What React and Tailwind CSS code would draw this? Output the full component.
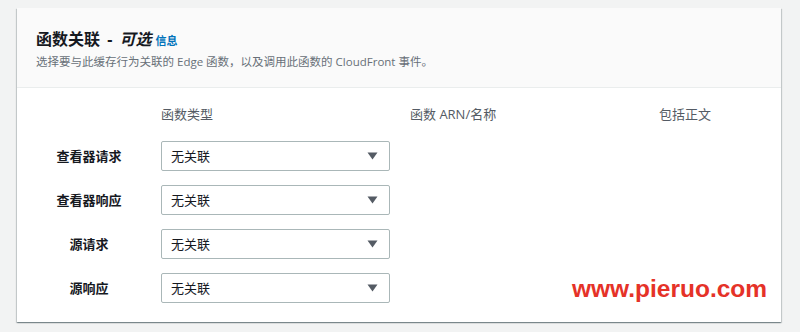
import React from "react";

const rows = ["查看器请求", "查看器响应", "源请求", "源响应"];

function Select() {
  return (
    <div className="flex h-[30px] w-[229px] items-center justify-between rounded-[2px] border border-[#aab7b8] bg-white pl-[9px] pr-[10px]">
      <span className="text-[13px] leading-[18px] text-[#16191f]">无关联</span>
      <svg width="11" height="8" viewBox="0 0 11 8" className="mr-[1px]">
        <path d="M0.5 0.5 H10.5 L5.5 7.5 Z" fill="#545b64" />
      </svg>
    </div>
  );
}

export default function App() {
  return (
    <div
      className="relative h-[332px] w-[800px] bg-[#f2f3f3] pt-[8px]"
      style={{ fontFamily: '"Open Sans","Noto Sans CJK SC",sans-serif' }}
    >
      <div className="ml-[17px] w-[764px] bg-white shadow-[0_1px_1px_0_rgba(0,28,36,0.3),1px_1px_1px_0_rgba(0,28,36,0.15),-1px_1px_1px_0_rgba(0,28,36,0.15)]">
        <div className="h-[80px] border-b border-[#eaeded] bg-[#fafafa] pl-[19px] pt-[20px]">
          <div className="flex items-baseline">
            <span className="text-[16px] font-bold leading-[22px] text-[#16191f]">
              函数关联 <span className="mx-[3px]">-</span> <i>可选</i>
            </span>
            <span className="ml-[4px] text-[11px] font-bold leading-[16px] text-[#0073bb]">信息</span>
          </div>
          <div className="mt-[4px] text-[11.5px] leading-[16px] text-[#687078]">
            选择要与此缓存行为关联的 Edge 函数，以及调用此函数的 CloudFront 事件。
          </div>
        </div>
        <div className="grid grid-cols-[144px_249px_249px_1fr] pb-[19px] pt-[17px]">
          <div />
          <div className="text-[13px] leading-[18px] text-[#545b64]">函数类型</div>
          <div className="text-[13px] leading-[18px] text-[#545b64]">函数 ARN/名称</div>
          <div className="text-[13px] leading-[18px] text-[#545b64]">包括正文</div>
          {rows.map((r, i) => (
            <React.Fragment key={r}>
              <div
                className={`flex h-[30px] items-center justify-center pl-[39px] pr-[39px] text-[13px] font-bold leading-[18px] text-[#16191f] ${
                  i === 0 ? "mt-[18px]" : "mt-[14px]"
                }`}
              >
                {r}
              </div>
              <div className={i === 0 ? "mt-[18px]" : "mt-[14px]"}>
                <Select />
              </div>
              <div />
              <div />
            </React.Fragment>
          ))}
        </div>
      </div>
      <div
        className="absolute left-[572px] top-[275px] text-[24.5px] font-bold leading-[28px] text-[#e53228]"
        style={{ fontFamily: '"Liberation Sans",Arial,sans-serif' }}
      >
        www.pieruo.com
      </div>
    </div>
  );
}
